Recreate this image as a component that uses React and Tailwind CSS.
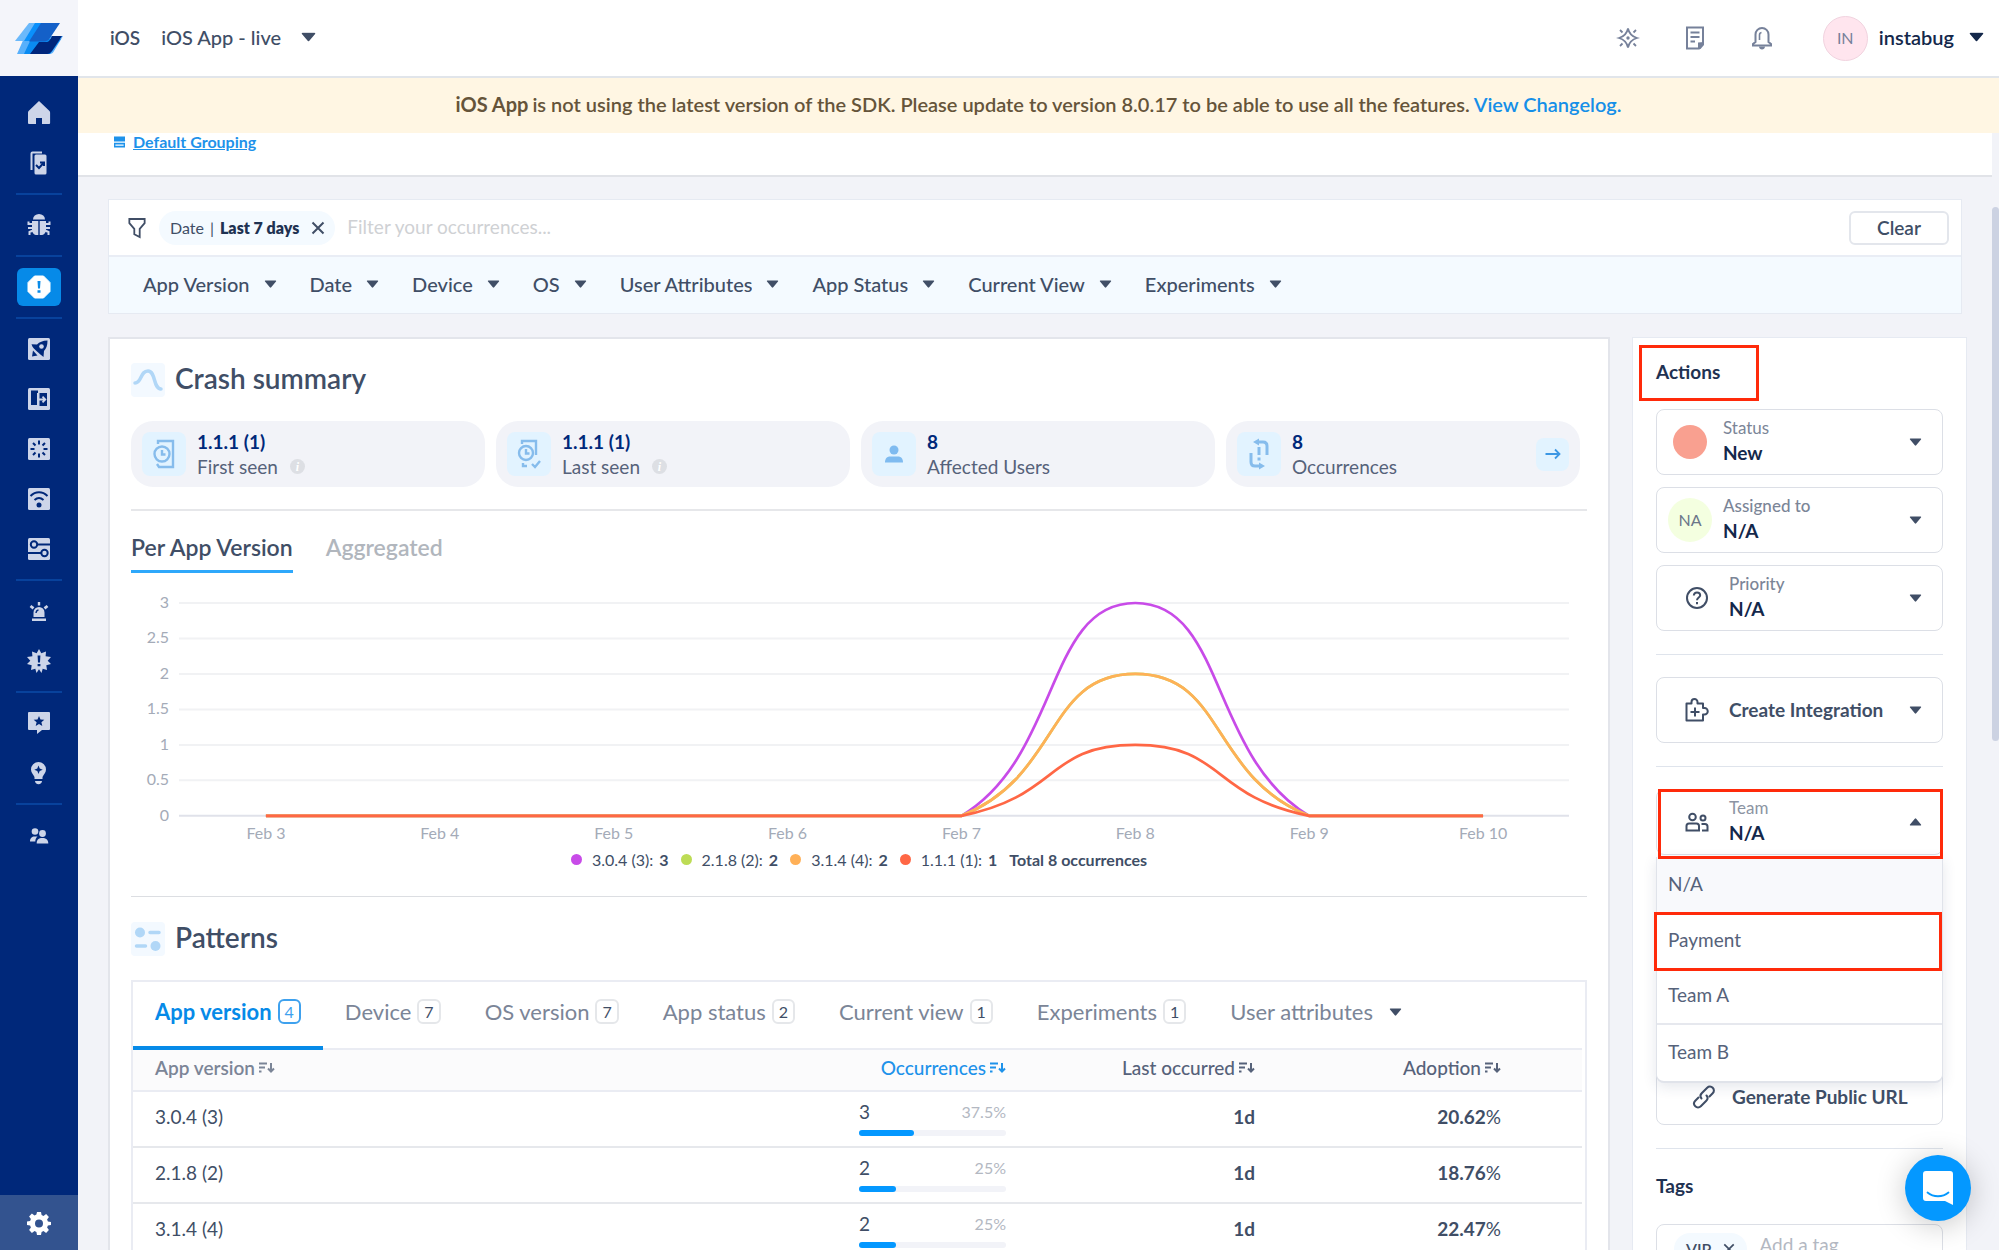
import React, { useState } from "react";
import clsx from "clsx";

const filters = ["App Version", "Date", "Device", "OS", "User Attributes", "App Status", "Current View", "Experiments"];

const patternTabs = [
  { name: "App version", count: 4 },
  { name: "Device", count: 7 },
  { name: "OS version", count: 7 },
  { name: "App status", count: 2 },
  { name: "Current view", count: 1 },
  { name: "Experiments", count: 1 },
];

const rows = [
  { version: "3.0.4 (3)", occurrences: 3, percent: 37.5, last: "1d", adoption: "20.62" },
  { version: "2.1.8 (2)", occurrences: 2, percent: 25, last: "1d", adoption: "18.76" },
  { version: "3.1.4 (4)", occurrences: 2, percent: 25, last: "1d", adoption: "22.47" },
];

const series = [
  { name: "3.0.4 (3)", total: 3, stroke: "#c84be8", dot: "bg-[#c84be8]" },
  { name: "2.1.8 (2)", total: 2, stroke: "#bddc55", dot: "bg-[#bddc55]" },
  { name: "3.1.4 (4)", total: 2, stroke: "#ffb057", dot: "bg-[#ffb057]" },
  { name: "1.1.1 (1)", total: 1, stroke: "#ff6745", dot: "bg-[#ff6745]" },
];

const teams = ["N/A", "Payment", "Team A", "Team B"];

const Caret = ({ up, className }) => (
  <svg viewBox="0 0 12 8" className={clsx("w-[13px] h-[8px] shrink-0 pointer-events-none", up && "rotate-180", className)} fill="currentColor" aria-hidden="true">
    <path d="M1 .5h10a.6.6 0 0 1 .5 1L6.700 7.200a.9.9 0 0 1-1.400 0L.5 1.500a.6.6 0 0 1 .5-1z" />
  </svg>
);

const Logo = () => (
  <svg viewBox="0 0 48 31" className="w-[48px] h-[31px]" aria-hidden="true">
    <path d="M10 13h38l-9 15c-1 2-2 3-5 3H2z" fill="#58b0fb" />
    <path d="M16 16h30L35 31H9z" fill="#0a8bf2" />
    <path d="M37 13h10l-10 15c-1.500 2-3 3-5 3H15l9-12h7c3 0 4-2 6-6z" fill="#00267c" />
    <path d="M14 0h30L31 18H0z" fill="#6bb9fb" />
    <path d="M20 0h20L28 18H9z" fill="#0a90fb" />
    <path d="M26 0h19L35 15c-1.500 2.200-3 3.500-6 3.500H14z" fill="#1460c8" />
  </svg>
);

const NavSvg = ({ children }) => (
  <svg viewBox="0 0 24 24" className="w-[24px] h-[24px]" fill="#cdd5e9" aria-hidden="true">{children}</svg>
);

const navGroups = [
  [
    { label: "Home", icon: <path d="M12 0 22.500 10c.4.500.600 1 .600 1.600V22a1 1 0 0 1-1 1H15v-6H9v6H2a1 1 0 0 1-1-1V11.600c0-.600.200-1.100.600-1.600z" /> },
    { label: "Overview", icon: <><path d="M3.500 19V2.500a2 2 0 0 1 2-2H15v2H5.500V19z" /><rect x="7.500" y="3.500" width="12" height="20" rx="1.500" /><path d="m9 14 3 3 4.500-5m-3.500-.5h4V15" stroke="#00287a" strokeWidth="2" fill="none" /></> },
  ],
  [
    { label: "Bugs", icon: <><path d="M6 6.500a6 5.500 0 0 1 12 0z" /><path d="M5 8h6.300v14H10c-3 0-5-2-5-6zM12.700 8H19v8c0 4-2 6-5 6h-1.300z" /><path d="M1.500 8.500v2.500H6M1 15h5M2.500 22v-3L6 17.500M22.500 8.500v2.500H18M23 15h-5M21.500 22v-3L18 17.500" stroke="#cdd5e9" strokeWidth="2" fill="none" /></> },
  ],
  [
    { label: "Crashes", active: true, icon: <><path d="M7.500 1h9L23 7.500v9L16.500 23h-9L1 16.500v-9z" fill="#fff" stroke="#fff" strokeLinejoin="round" /><path d="M10.500 6h3l-.5 7.500h-2zM10.500 15.200h3v2.600h-3z" fill="#0a8be8" /></> },
  ],
  [
    { label: "Performance", icon: <><rect x="1" y="1" width="22" height="22" rx="1.500" /><path d="M20.500 3.500c-5 .2-8 1.500-10.500 4L4.500 7.300c1 3.700 3.500 5.200 5.500 7.200 2 1.800 4 3.500 6.500 5.500l.5-6c2.300-2.500 3.500-5.500 3.500-10.500z" fill="#00287a" /><circle cx="14.500" cy="9.500" r="2.300" fill="#cdd5e9" /><path d="M6 13.500 10.500 18.500 5 19.500z" fill="#00287a" /></> },
    { label: "App launch", icon: <><rect x="1" y="1" width="22" height="22" rx="1.500" /><path d="M4 3.500h7V6h-1v12H4zM12.500 6H20v13h-7.500z" fill="#00287a" /><path d="M12 12.500h6m-2.500-2.800 2.800 2.800-2.800 2.800" stroke="#cdd5e9" strokeWidth="1.800" fill="none" /></> },
    { label: "Screen loading", icon: <><rect x="1" y="1" width="22" height="22" rx="1.500" /><path d="M12 3.500v4M12 16.500v4M3.500 12h4M16.500 12h4M6 6l2.500 2.500M15.500 15.500 18 18M6 18l2.500-2.500M15.500 8.500 18 6" stroke="#00287a" strokeWidth="2" /></> },
    { label: "Network", icon: <><rect x="1" y="1" width="22" height="22" rx="1.500" /><path d="M3.500 9c5-5 12-5 17 0M7.500 13c3-2.700 6-2.700 9 0" stroke="#00287a" strokeWidth="2" fill="none" /><circle cx="12" cy="18" r="2.500" fill="#00287a" /></> },
    { label: "Flows", icon: <><rect x="1" y="1" width="22" height="22" rx="1.500" /><path d="M10 7.500h13M1 16h13.500" stroke="#00287a" strokeWidth="2" /><circle cx="7" cy="7.500" r="3.200" fill="#cdd5e9" stroke="#00287a" strokeWidth="2" /><circle cx="17.500" cy="16" r="3.200" fill="#cdd5e9" stroke="#00287a" strokeWidth="2" /></> },
  ],
  [
    { label: "Alerts", icon: <><path d="M6.500 18v-4.500a5.500 5.500 0 0 1 11 0V18zM5 19.500h14V22H5zM10.800 3h2.400v3.500h-2.400z" /><path d="m3.500 7 3 2.300M20.500 7l-3 2.300" stroke="#cdd5e9" strokeWidth="2.800" /><path d="M9 14a3.500 3.500 0 0 1 2.500-3.200" stroke="#00287a" strokeWidth="1.300" fill="none" /></> },
    { label: "Rules", icon: <><path d="m12 0 2.300 4.300L19 2.500l-.4 4.700 5.400.800-3.300 3.700L24 15l-4.700 1.200.7 4.800-4.300-1.300L14.500 24 12 20.300 9.500 24l-1.200-4.300L4 21l.7-4.800L0 15l3.300-3.300L0 8l5.400-.8L5 2.500l4.700 1.800z" /><path d="M10.600 6.500h2.800l-.4 7h-2zM10.600 15h2.800v2.300h-2.800z" fill="#00287a" /></> },
  ],
  [
    { label: "Surveys", icon: <><path d="M2 1h20a1 1 0 0 1 1 1v16a1 1 0 0 1-1 1h-7l-5 4v-4H2a1 1 0 0 1-1-1V2a1 1 0 0 1 1-1z" /><path d="m12 5 1.500 3.500 3.800.3-2.900 2.500.9 3.700-3.300-2-3.300 2 .9-3.700-2.900-2.500 3.800-.3z" fill="#00287a" /></> },
    { label: "Feature requests", icon: <><path d="M11.500 1a7.500 7.500 0 0 1 7.500 7.600c0 3.400-2.400 5-3.500 7.400v2h-8v-2C6.400 13.600 4 12 4 8.600A7.500 7.500 0 0 1 11.500 1zM8 20h7c0 2-1.500 3.200-3.500 3.200S8 22 8 20z" /><path d="m11.500 4.500 1.200 3 3 1.200-3 1.200-1.200 3-1.200-3-3-1.200 3-1.200z" fill="#00287a" /></> },
  ],
  [
    { label: "Team", icon: <><circle cx="8" cy="8.500" r="3.300" /><circle cx="15.500" cy="10.500" r="3.400" /><path d="M3 18.500c0-3.500 2-5 4.500-5h3c-1.500 1.200-2.200 3-2.200 5zM9.700 20.500c0-4 2-5.500 5.600-5.500s6 1.500 6 5.500z" /></> },
  ],
];

const NavRail = () => (
  <nav aria-label="Main" className="w-[78px] shrink-0 bg-[#00287a] flex flex-col">
    <a href="#home" aria-label="Instabug" className="h-[76px] shrink-0 bg-[#f4f5fa] flex items-center justify-center">
      <Logo />
    </a>
    <div className="flex-1 min-h-0 overflow-hidden pt-3 px-4">
      {navGroups.map((group, i) => (
        <div key={i}>
          {i > 0 && <hr className="my-[5px] border-t-2 border-[#08429c]" />}
          {group.map((item) => (
            <div key={item.label} className="h-[50px] flex items-center justify-center">
              <a href={`#${item.label}`} aria-label={item.label} className={clsx("w-[44px] h-[38px] rounded-md flex items-center justify-center", item.active && "bg-[#068ae8]")}>
                <NavSvg>{item.icon}</NavSvg>
              </a>
            </div>
          ))}
        </div>
      ))}
    </div>
    <a href="#settings" aria-label="Settings" className="h-[55px] shrink-0 bg-[#33538f] flex items-center justify-center">
      <svg viewBox="0 0 24 24" className="w-[24px] h-[24px]" fill="#fff" fillRule="evenodd" aria-hidden="true">
        <path d="M10 1h4l.6 3.100 1.900.8 2.600-1.800 2.800 2.800-1.800 2.600.8 1.900L24 11v3l-3.100.600-.8 1.900 1.800 2.600-2.800 2.800-2.600-1.800-1.900.8L14 24h-4l-.6-3.100-1.900-.8-2.600 1.800-2.800-2.800 1.800-2.600-.8-1.900L0 14v-3.500l3.100-.6.8-1.900-1.800-2.600 2.800-2.800 2.600 1.800 1.900-.8zM12 8.500a4 4 0 1 0 0 8 4 4 0 0 0 0-8z" />
      </svg>
    </a>
  </nav>
);

const TopBar = () => (
  <header className="h-[78px] shrink-0 bg-white border-b-2 border-[#e1e5ea] flex items-center pl-8 pr-[16px]">
    <span className="text-[19px] font-semibold text-[#404e66]">iOS</span>
    <label className="ml-[21px] pb-[2px] flex items-center text-[#404e66]">
      <select aria-label="Application" className="appearance-none field-sizing-content bg-transparent text-[20px] font-medium outline-none">
        <option>iOS App - live</option>
      </select>
      <Caret className="ml-[21px] scale-120" />
    </label>
    <div className="ml-auto flex items-center text-[#76819a]">
      <button aria-label="What's new" className="mr-[43px]">
        <svg viewBox="0 0 24 24" className="w-[24px] h-[24px]" fill="none" stroke="currentColor" strokeWidth="1.800" aria-hidden="true">
          <path d="M12 2.500c1.200 5.500 3.500 8 9 9.500-5.500 1.500-7.800 4-9 9.500-1.200-5.500-3.500-8-9-9.500 5.500-1.500 7.800-4 9-9.500z" />
          <path d="m4 4 2.500 2.500M20 4l-2.500 2.500M4 20l2.500-2.500M20 20l-2.500-2.500" />
          <circle cx="12" cy="12" r=".8" />
        </svg>
      </button>
      <button aria-label="Docs" className="mr-[43px]">
        <svg viewBox="0 0 24 24" className="w-[24px] h-[24px]" fill="none" stroke="currentColor" strokeWidth="2" aria-hidden="true">
          <path d="M4 1.500h16V17l-4 5.500H4z" />
          <path d="M7.500 6.500h9M7.500 11h9M7.500 15.500h4.500" />
          <path d="M21 16v3l-3.500 4H15v-6.500z" fill="currentColor" stroke="none" />
        </svg>
      </button>
      <button aria-label="Notifications" className="mr-[49px]">
        <svg viewBox="0 0 24 24" className="w-[24px] h-[24px]" fill="none" stroke="currentColor" strokeWidth="2" aria-hidden="true">
          <path d="M3 19.500v-1.500l2.500-2V8.500a6.500 6.500 0 0 1 13 0V16l2.500 2v1.500z" />
          <path d="M9.500 14V9a2.500 2.500 0 0 1 2-2.500" strokeWidth="1.600" />
          <path d="M9 20.500h6c0 2-1.500 3-3 3s-3-1-3-3z" fill="currentColor" stroke="none" />
        </svg>
      </button>
      <span className="w-[45px] h-[45px] rounded-full bg-[#ffe5ee] border border-[#f1d3df] flex items-center justify-center text-[16px]">IN</span>
      <button className="ml-[11px] pb-[2px] flex items-center text-[20px] font-semibold text-[#14284b]">
        instabug
        <Caret className="ml-[16px] scale-120" />
      </button>
    </div>
  </header>
);

const FilterCard = () => (
  <section className="mr-[5px] bg-white border border-[#e6eaf2]">
    <div className="h-[57px] border-b-2 border-[#e9edf5] flex items-center pl-[19px] pr-3">
      <svg viewBox="0 0 20 24" className="w-[18px] h-[24px] shrink-0" fill="none" stroke="#404e66" strokeWidth="2" aria-hidden="true">
        <path d="M1.500 2h17v4.500L13 13v9l-6-3v-6L1.500 6.500z" />
      </svg>
      <span className="ml-[13px] h-[34px] rounded-full bg-[#f4faff] pl-[11px] pr-2.5 flex items-center text-[16px] text-[#404e66]">
        Date<span className="mx-1.5">|</span><b className="font-extrabold text-[#1f3252]">Last 7 days</b>
        <button aria-label="Remove date filter" className="ml-3">
          <svg viewBox="0 0 14 14" className="w-[14px] h-[14px]" stroke="#404e66" strokeWidth="2" aria-hidden="true"><path d="m1.500 1.500 11 11m0-11-11 11" /></svg>
        </button>
      </span>
      <input aria-label="Filter your occurrences" placeholder="Filter your occurrences..." className="ml-3 flex-1 min-w-0 text-[19px] outline-none placeholder:text-[#cfd1d4]" />
      <button className="w-[100px] h-[34px] border-2 border-[#e3e6ec] rounded-md text-[19px] font-semibold text-[#404e66] leading-none">Clear</button>
    </div>
    <div className="h-[56px] bg-[#f4faff] flex items-center pl-[34px] pb-[2px] gap-[33px] text-[#404e66]">
      {filters.map((name) => (
        <label key={name} className="flex items-center">
          <select aria-label={name} className="appearance-none field-sizing-content bg-transparent text-[20px] font-medium outline-none">
            <option>{name}</option>
          </select>
          <Caret className="ml-[14px]" />
        </label>
      ))}
    </div>
  </section>
);

const SectionTitle = ({ icon, children }) => (
  <h2 className="flex items-center text-[28px] leading-[30px] font-semibold text-[#404e66]">
    <svg viewBox="0 0 34 34" className="w-[34px] h-[34px] mr-2.5 rounded-sm bg-[#f3f9ff]" fill="none" stroke="#b1d7f7" strokeWidth="3.500" strokeLinecap="round" aria-hidden="true">{icon}</svg>
    <span className="pb-1">{children}</span>
  </h2>
);

const Info = () => (
  <span className="ml-3 w-[15px] h-[15px] rounded-full bg-[#dddfe4] text-white text-[12px] leading-none italic font-bold font-['Liberation_Serif',serif] flex items-center justify-center">i</span>
);

const Stat = ({ icon, value, label, info, arrow }) => (
  <div className="h-[66px] rounded-[22px] bg-[#f2f3f8] pl-[11px] pr-[11px] flex items-center">
    <svg viewBox="0 0 44 44" className="w-[44px] h-[44px] rounded-lg bg-[#e2f3ff] shrink-0" fill="none" stroke="#86bcec" strokeWidth="2.400" aria-hidden="true">{icon}</svg>
    <div className="ml-[11px] leading-[25px]">
      <div className="text-[19px] font-bold text-[#00287a]">{value}</div>
      <div className="text-[19px] text-[#56627a] flex items-center">{label}{info && <Info />}</div>
    </div>
    {arrow && (
      <button aria-label="Open occurrences" className="ml-auto w-[33px] h-[33px] rounded-lg bg-[#e2f3ff] flex items-center justify-center">
        <svg viewBox="0 0 16 12" className="w-[16px] h-[12px]" fill="none" stroke="#3c97e4" strokeWidth="1.800" aria-hidden="true"><path d="M.5 6h14M10 1.500 14.500 6 10 10.500" /></svg>
      </button>
    )}
  </div>
);

// plot area: zero line at y=231, 71px per occurrence, 174px per day
const zeroY = 231;
const dayX = (i) => 135 + i * 174;
const valueY = (v) => zeroY - v * 71;

const linePath = (peak) => {
  const top = valueY(peak);
  const foot = zeroY - peak * 20;
  const [a, b, c] = [dayX(4), dayX(5), dayX(6)];
  return `M${dayX(0)} ${zeroY}H${a}C${a + 100} ${foot} ${a + 84} ${top} ${b} ${top}S${c - 100} ${foot} ${c} ${zeroY}H${dayX(7)}`;
};

const Chart = () => (
  <svg viewBox="0 0 1457 262" className="block w-full" role="img" aria-label="Occurrences per app version">
    {[3, 2.5, 2, 1.5, 1, 0.5, 0].map((v) => (
      <g key={v}>
        <line x1="48" x2="1439" y1={valueY(v)} y2={valueY(v)} stroke={v === 0 ? "#e0e2ea" : "#f1f2f4"} strokeWidth="2" />
        <text x="38" y={valueY(v) + 5} textAnchor="end" fontSize="16" fill="#a4abb8">{v}</text>
      </g>
    ))}
    {[3, 4, 5, 6, 7, 8, 9, 10].map((d, i) => (
      <text key={d} x={dayX(i)} y="254" textAnchor="middle" fontSize="16" fill="#a4abb8">{`Feb ${d}`}</text>
    ))}
    {series.map((s) => (
      <path key={s.name} d={linePath(s.total)} fill="none" stroke={s.stroke} strokeWidth="2.700" />
    ))}
  </svg>
);

const SortIcon = () => (
  <svg viewBox="0 0 16 12" className="ml-1 w-[16px] h-[12px]" fill="none" stroke="currentColor" strokeWidth="2" aria-hidden="true">
    <path d="M0 1.500h8M0 5.500h6M0 9.500h2.500M12 1v8M9 6.500l3 3 3-3" />
  </svg>
);

const PatternsTable = () => {
  const [tab, setTab] = useState("App version");

  return (
    <div className="mt-6 border-2 border-b-0 border-[#eaecf3]">
      <div role="tablist" className="h-[68px] flex items-stretch border-b-2 border-[#eaecf3] mr-[3px]">
        {patternTabs.map(({ name, count }) => (
          <button
            key={name}
            role="tab"
            aria-selected={tab === name}
            onClick={() => setTab(name)}
            className={clsx("px-[22px] pb-1 flex items-center text-[22px] border-b-4 -mb-[2px]", tab === name ? "font-bold text-[#068ae8] border-[#068ae8]" : "text-[#7b8597] border-transparent")}
          >
            {name}
            <span className={clsx("ml-1.5 min-w-[20px] h-[25px] px-[5px] rounded-md border-2 text-[16px] font-normal flex items-center justify-center", tab === name ? "border-[#3ea1ee] text-[#3ea1ee]" : "border-[#e5e7ea] text-[#404e66]")}>{count}</span>
          </button>
        ))}
        <label className="px-[22px] pb-1 flex items-center text-[22px] text-[#7b8597] border-b-4 -mb-[2px] border-transparent">
          <select aria-label="User attributes" className="appearance-none field-sizing-content bg-transparent outline-none">
            <option>User attributes</option>
          </select>
          <Caret className="ml-4 text-[#404e66]" />
        </label>
      </div>
      <div className="pr-[3px]">
        <table className="w-full table-fixed border-separate border-spacing-0 text-[19px] text-[#404e66]">
          <colgroup>
            <col />
            <col className="w-[228px]" />
            <col className="w-[249px]" />
            <col className="w-[246px]" />
          </colgroup>
          <thead className="bg-[#fbfbfc]">
            <tr className="h-[42px]">
              <th className="border-b-2 border-[#eaecf3] pl-[22px] pb-1 text-left font-semibold text-[#7b8597]">
                <button className="flex items-center">App version<SortIcon /></button>
              </th>
              <th className="border-b-2 border-[#eaecf3] pr-[81px] pb-1 font-medium text-[#1e92ea]">
                <button className="flex items-center ml-auto">Occurrences<SortIcon /></button>
              </th>
              <th className="border-b-2 border-[#eaecf3] pr-[81px] pb-1 font-medium text-[#56627a]">
                <button className="flex items-center ml-auto whitespace-nowrap">Last occurred<SortIcon /></button>
              </th>
              <th className="border-b-2 border-[#eaecf3] pr-[81px] pb-1 font-medium text-[#56627a]">
                <button className="flex items-center ml-auto">Adoption<SortIcon /></button>
              </th>
            </tr>
          </thead>
          <tbody>
            {rows.map((row) => (
              <tr key={row.version} className="h-[56px]">
                <td className="border-b-2 border-[#e6e8ec] pl-[22px] pb-[3px]">{row.version}</td>
                <td className="border-b-2 border-[#e6e8ec] pr-[81px] pb-0">
                  <div className="flex items-center justify-between leading-[20px]">
                    <span>{row.occurrences}</span>
                    <span className="text-[16px] text-[#b3b8c2]">{row.percent}%</span>
                  </div>
                  <div className="mt-2 h-[6px] rounded-full bg-[#f2f3f8]">
                    <div className="h-full rounded-full bg-[#0498ff]" style={{ width: `${row.percent}%` }} />
                  </div>
                </td>
                <td className="border-b-2 border-[#e6e8ec] pr-[81px] pb-[3px] text-right font-bold">{row.last}</td>
                <td className="border-b-2 border-[#e6e8ec] pr-[81px] pb-[3px] text-right"><b className="font-bold">{row.adoption}</b>%</td>
              </tr>
            ))}
          </tbody>
        </table>
      </div>
    </div>
  );
};

const CrashCard = () => {
  const [view, setView] = useState("Per App Version");

  return (
    <section className="flex-1 min-w-0 bg-white border-2 border-b-0 border-[#e3e5eb] px-[21px] pt-6">
      <SectionTitle icon={<path d="M4 20c7 0 5-12 13-12s5 18 13 18" />}>Crash summary</SectionTitle>

      <div className="mt-6 mr-[7px] grid grid-cols-4 gap-[11px]">
        <Stat
          value="1.1.1 (1)" label="First seen" info
          icon={<><path d="M16 12V9h15v26H17l-2-3" /><circle cx="20" cy="22" r="7.500" /><path d="M20 18v4.500h3.500" /></>}
        />
        <Stat
          value="1.1.1 (1)" label="Last seen" info
          icon={<><path d="M15 12V9h14v14M16 31v3h4" /><circle cx="19" cy="21" r="7" /><path d="M19 17v4.500h3.500M25 32l3 3 5-6" /></>}
        />
        <Stat
          value="8" label="Affected Users"
          icon={<g fill="#7fbbf0" stroke="none"><circle cx="22" cy="18" r="4.500" /><path d="M13 30.500c0-4 2-6 5-6h8c3 0 5 2 5 6z" /></g>}
        />
        <Stat
          value="8" label="Occurrences" arrow
          icon={<><path d="M20 10h6c3 0 4 1.500 4 4v9M14 21v9c0 3 1.500 4 4 4h6" strokeWidth="3" /><path d="m16 10 6-3.500v7zM28 34l-6-3.500v7z" fill="#86bcec" stroke="none" /><path d="M22 15v8M22 25.500v3" strokeWidth="3" /></>}
        />
      </div>

      <hr className="mt-[22px] border-t-2 border-[#e6e7ea]" />

      <div role="tablist" className="mt-[18px] flex gap-[33px] text-[23px] leading-[36px]">
        {["Per App Version", "Aggregated"].map((name) => (
          <button
            key={name}
            role="tab"
            aria-selected={view === name}
            onClick={() => setView(name)}
            className={clsx("border-b-[3px] pb-[5px] font-semibold", view === name ? "text-[#404e66] border-[#2ea8fb]" : "text-[#b1b6bd] border-transparent")}
          >
            {name}
          </button>
        ))}
      </div>

      <div className="mt-3">
        <Chart />
      </div>

      <ul className="mt-px flex items-center justify-center text-[16px] leading-[24px] text-[#404e66]">
        {series.map((s) => (
          <li key={s.name} className="flex items-center mr-3">
            <span className={clsx("w-[11px] h-[11px] rounded-full mr-2.5", s.dot)} />
            {s.name}: <b className="ml-1.5 font-bold">{s.total}</b>
          </li>
        ))}
        <li className="font-bold">Total 8 occurrences</li>
      </ul>

      <hr className="mt-6 mb-[25px] border-[#dcdee2]" />

      <SectionTitle
        icon={<><circle cx="9" cy="10.500" r="5" fill="#b1d7f7" stroke="none" /><circle cx="24.500" cy="24" r="5" fill="#b1d7f7" stroke="none" /><path d="M19 10.500h9M5.500 24h9" /></>}
      >
        Patterns
      </SectionTitle>
      <PatternsTable />
    </section>
  );
};

const SelectBox = ({ id, label, value, icon, wide, labelClass }) => (
  <div className="h-[66px] border border-[#dcdfe6] rounded-lg flex items-center pr-5">
    <span className={clsx("flex shrink-0 justify-center", wide ? "w-[72px] pl-[8px]" : "w-[66px]")}>{icon}</span>
    <div className="flex-1 min-w-0 pb-1">
      <label htmlFor={id} className={clsx("block text-[17px] leading-[25px] text-[#7b8597]", labelClass)}>{label}</label>
      <select id={id} className="block w-full appearance-none bg-transparent text-[19px] leading-[25px] font-bold text-[#14284b] outline-none">
        <option>{value}</option>
      </select>
    </div>
    <Caret className="text-[#404e66]" />
  </div>
);

const lineIcon = "w-[24px] h-[24px]";

const ActionsCard = () => {
  const [team, setTeam] = useState("N/A");

  return (
    <aside className="w-[335px] shrink-0 bg-white border border-b-0 border-[#e6eaf2] px-[23px] pt-[22px]">
      <div className="relative">
        <h3 className="text-[19px] leading-[24px] font-bold text-[#1f3252]">Actions</h3>
        <span className="absolute -left-[17px] -top-[15px] w-[120px] h-[56px] border-[3px] border-[#ff2a0a] pointer-events-none" />
      </div>

      <div className="mt-[25px] flex flex-col gap-3">
        <SelectBox id="status" label="Status" value="New" icon={<span className="w-[34px] h-[34px] rounded-full bg-[#f9a090]" />} />
        <SelectBox
          id="assignee" label="Assigned to" value="N/A" labelClass="font-medium"
          icon={<span className="w-[44px] h-[44px] rounded-full bg-[#f4ffe0] flex items-center justify-center text-[16px] text-[#6b768a]">NA</span>}
        />
        <SelectBox
          id="priority" label="Priority" value="N/A" wide labelClass="font-medium"
          icon={
            <svg viewBox="0 0 24 24" className={lineIcon} fill="none" stroke="#404e66" strokeWidth="2" aria-hidden="true">
              <circle cx="12" cy="12" r="10" />
              <path d="M8.800 9.500C9 7.500 10.300 6.500 12 6.500s3.200 1 3.200 2.800c0 2.200-3.200 2.400-3.200 5M12 16v2.200" />
            </svg>
          }
        />
      </div>

      <hr className="mt-[23px] border-[#dfe4ec]" />

      <button className="mt-[22px] w-full h-[66px] border border-[#dcdfe6] rounded-lg flex items-center pr-5 text-[19px] font-bold text-[#404e66]">
        <span className="w-[72px] pl-[8px] flex justify-center shrink-0">
          <svg viewBox="0 0 24 24" className={lineIcon} fill="none" stroke="#404e66" strokeWidth="2" aria-hidden="true">
            <path d="M1.500 22.500V5.500h5V4a3 3 0 0 1 6 0v1.500h5.500V10h1.500a3.200 3.200 0 0 1 0 6.500H18v6z" strokeLinejoin="round" />
            <path d="M10 9.500v9M5.500 14h9" />
          </svg>
        </span>
        Create Integration
        <Caret className="ml-auto" />
      </button>

      <hr className="mt-[23px] border-[#dfe4ec]" />

      <div className="relative mt-[22px]">
        <button aria-haspopup="listbox" aria-expanded="true" className="w-full h-[66px] border border-[#dcdfe6] rounded-lg flex items-center pr-5 text-left">
          <span className="w-[72px] pl-[8px] flex justify-center shrink-0">
            <svg viewBox="0 0 24 24" className={lineIcon} fill="none" stroke="#404e66" strokeWidth="2" aria-hidden="true">
              <circle cx="7.500" cy="7" r="3.300" />
              <circle cx="18" cy="8" r="2.500" />
              <path d="M1.500 20.500V16c0-1.500 1-2.500 2.500-2.500h7.500c1.500 0 2.500 1 2.500 2.500v4.500zM16.500 14H20c1.500 0 2.500 1 2.500 2.500v4h-5.500" />
            </svg>
          </span>
          <span className="flex-1 pb-1">
            <span className="block text-[17px] leading-[25px] text-[#8c94a3]">Team</span>
            <span className="block text-[19px] leading-[25px] font-bold text-[#14284b]">{team}</span>
          </span>
          <Caret up className="text-[#404e66]" />
        </button>
        <span className="absolute left-[2px] right-0 top-0 h-[70px] border-[3px] border-[#ff2a0a] z-20 pointer-events-none" />
      </div>

      <ul role="listbox" aria-label="Team" className="relative z-10 mt-[2px] bg-white border-x border-b-2 border-[#e0e3ea] rounded-b-lg shadow-[0_4px_14px_rgba(40,60,100,0.12)] text-[19px] text-[#56627a]">
        {teams.map((name, i) => (
          <li key={name} role="option" aria-selected={team === name} onClick={() => setTeam(name)} className={clsx("relative h-[56px] pl-[11px] pb-[2px] flex items-center", i === 0 && "bg-[#f8f9fc]", i === 2 && "border-b-2 border-[#e6e8ee]")}>
            {name}
            {name === "Payment" && <span className="absolute -left-[3px] right-0 -top-[1px] -bottom-[2px] border-[3px] border-[#ff2a0a] pointer-events-none" />}
          </li>
        ))}
      </ul>

      <button className="-mt-[14px] w-full h-[56px] border border-[#dcdfe6] rounded-lg flex items-center pl-[35px] text-[19px] font-bold text-[#404e66]">
        <svg viewBox="0 0 24 24" className="w-[24px] h-[24px] mr-4" fill="none" stroke="#404e66" strokeWidth="2" strokeLinecap="round" aria-hidden="true">
          <path d="M9.500 13.500c-1.500-1.700-1.300-3.700.2-5.200l5.500-5.500c1.700-1.700 4-1.500 5.500 0s1.700 3.800 0 5.500l-3.200 3.200" />
          <path d="M14.500 10.500c1.500 1.700 1.300 3.700-.2 5.200l-5.500 5.500c-1.700 1.700-4 1.500-5.500 0s-1.700-3.800 0-5.500l3.200-3.200" />
        </svg>
        Generate Public URL
      </button>

      <hr className="mt-[23px] border-[#dfe4ec]" />

      <h3 className="mt-[25px] text-[19px] leading-[24px] font-bold text-[#1f3252]">Tags</h3>
      <div className="mt-[26px] h-[66px] border border-[#dcdfe6] rounded-lg flex items-start pl-[17px] pt-2">
        <span className="h-[32px] rounded-full bg-[#f4faff] px-3 flex items-center shrink-0 text-[16px] font-semibold text-[#404e66]">
          VIP
          <button aria-label="Remove VIP" className="ml-3">
            <svg viewBox="0 0 14 14" className="w-[12px] h-[12px]" stroke="#404e66" strokeWidth="2" aria-hidden="true"><path d="m1.500 1.500 11 11m0-11-11 11" /></svg>
          </button>
        </span>
        <input aria-label="Add a tag" placeholder="Add a tag" className="ml-3 w-[140px] h-[24px] text-[19px] outline-none placeholder:text-[#b3b8c2]" />
      </div>
    </aside>
  );
};

export default function App() {
  return (
    <div className="h-screen flex overflow-hidden bg-[#f2f3f8] font-[Lato,'Open_Sans',sans-serif]">
      <NavRail />
      <div className="flex-1 min-w-0 flex flex-col">
        <TopBar />
        <p className="h-[55px] pb-[3px] shrink-0 bg-[#fff6e3] flex items-center justify-center gap-1 text-[20px] font-semibold text-[#65543a]">
          <b className="font-bold">iOS App</b> is not using the latest version of the SDK. Please update to version 8.0.17 to be able to use all the features.
          <a href="#changelog" className="text-[#158fe8]">View Changelog.</a>
        </p>
        <div className="flex-1 min-h-0 flex">
          <main className="flex-1 min-w-0 overflow-hidden">
            <div className="h-[44px] bg-white border-b-2 border-[#e1e3e8] pl-9 flex items-start">
              <a href="#grouping" className="flex items-center text-[16px] leading-[18px] text-[#1e92ea]">
                <svg viewBox="0 0 12 12" className="w-[11px] h-[12px] mr-2" fill="#1e92ea" aria-hidden="true">
                  <path d="M0 0h12v5.500H0zM0 6.800h12V12H0zM1.500 8.800v1.400h9V8.800z" fillRule="evenodd" />
                </svg>
                <span className="underline font-bold">Default Grouping</span>
              </a>
            </div>
            <div className="pt-[22px] pl-[30px] pr-[25px]">
              <FilterCard />
              <div className="mt-[23px] flex gap-[22px]">
                <CrashCard />
                <ActionsCard />
              </div>
            </div>
          </main>
          <div className="w-[7px] shrink-0 pt-[74px]">
            <div className="h-[534px] rounded-full bg-[#ccd2e2]" />
          </div>
        </div>
      </div>
      <button aria-label="Open chat" className="fixed right-[28px] bottom-[29px] z-30 w-[66px] h-[66px] rounded-full bg-[#0498ff] shadow-[0_4px_30px_rgba(0,0,0,0.22)] flex items-center justify-center">
        <svg viewBox="0 0 30 34" className="w-[30px] h-[34px]" aria-hidden="true">
          <path d="M3 0h24a3 3 0 0 1 3 3v31l-8-4H3a3 3 0 0 1-3-3V3a3 3 0 0 1 3-3z" fill="#fff" />
          <path d="M4.500 21.500c6 5 15 5 21 0" fill="none" stroke="#0498ff" strokeWidth="1.800" strokeLinecap="round" />
        </svg>
      </button>
    </div>
  );
}
